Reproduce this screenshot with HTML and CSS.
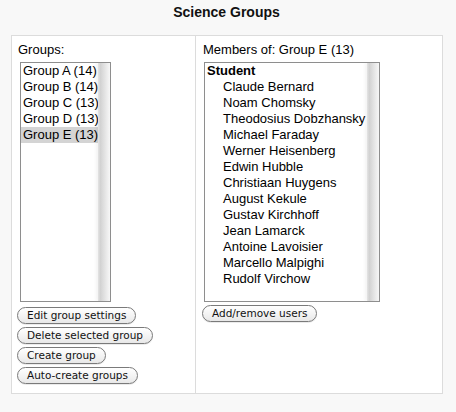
FILE: index.html
```html
<!DOCTYPE html>
<html>
<head>
<meta charset="utf-8">
<link rel="stylesheet" href="styles.css">
</head>
<body>
<h2 class="title">Science Groups</h2>
<div class="panel">
  <div class="col col-left">
    <div class="label">Groups:</div>
    <div class="listbox groups">
      <ul class="items">
        <li>Group A (14)</li>
        <li>Group B (14)</li>
        <li>Group C (13)</li>
        <li>Group D (13)</li>
        <li class="selected">Group E (13)</li>
      </ul>
      <div class="scrollbar"></div>
    </div>
    <div class="buttons">
      <button class="btn">Edit group settings</button>
      <button class="btn">Delete selected group</button>
      <button class="btn">Create group</button>
      <button class="btn">Auto-create groups</button>
    </div>
  </div>
  <div class="col col-right">
    <div class="label">Members of: Group E (13)</div>
    <div class="listbox members">
      <ul class="items">
        <li class="role">Student</li>
        <li class="member">Claude Bernard</li>
        <li class="member">Noam Chomsky</li>
        <li class="member">Theodosius Dobzhansky</li>
        <li class="member">Michael Faraday</li>
        <li class="member">Werner Heisenberg</li>
        <li class="member">Edwin Hubble</li>
        <li class="member">Christiaan Huygens</li>
        <li class="member">August Kekule</li>
        <li class="member">Gustav Kirchhoff</li>
        <li class="member">Jean Lamarck</li>
        <li class="member">Antoine Lavoisier</li>
        <li class="member">Marcello Malpighi</li>
        <li class="member">Rudolf Virchow</li>
      </ul>
      <div class="scrollbar"></div>
    </div>
    <div class="buttons buttons-right">
      <button class="btn">Add/remove users</button>
    </div>
  </div>
</div>
</body>
</html>
```
FILE: styles.css
```css
html, body {
  margin: 0;
  padding: 0;
  background: #f8f8f8;
}
body {
  font-family: "Liberation Sans", Arial, sans-serif;
  font-size: 13px;
  color: #000;
  width: 456px;
  height: 412px;
  overflow: hidden;
}
.title {
  margin: 4px 0 0 0;
  font-size: 14px;
  line-height: 16px;
  font-weight: bold;
  text-align: center;
  padding-right: 3px;
  color: #111;
}
.panel {
  margin: 15px 0 0 11px;
  width: 430px;
  height: 357px;
  border: 1px solid #dcdcdc;
  background: #fff;
  display: flex;
}
.col {
  padding-top: 6px;
}
.col-left {
  width: 178px;
  padding-left: 5px;
  border-right: 1px solid #dcdcdc;
}
.col-right {
  flex: 1;
  padding-left: 6px;
}
.label {
  line-height: 15px;
  margin-left: 1px;
  margin-bottom: 5px;
}
.listbox {
  position: relative;
  border: 1px solid #8e8e8e;
  height: 238px;
  background: #fff;
  overflow: hidden;
}
.groups {
  margin-left: 3px;
  width: 89px;
}
.members {
  margin-left: 2px;
  width: 174px;
}
.items {
  list-style: none;
  margin: 0;
  padding: 0;
  margin-right: 12px;
}
.items li {
  line-height: 16px;
  height: 16px;
  white-space: nowrap;
  padding-left: 1px;
}
.groups .items li {
  padding-left: 2px;
}
.items li.selected {
  background: #d4d4d4;
}
.members .items li.role {
  font-weight: bold;
  padding-left: 2px;
}
.members .items li.member {
  padding-left: 18px;
}
.scrollbar {
  position: absolute;
  top: 0;
  right: 0;
  bottom: 0;
  width: 12px;
  background: linear-gradient(to right, #e4e4e4 0%, #d2d2d2 20%, #dedede 45%, #ececec 75%, #f7f7f7 100%);
  box-shadow: -2px 0 3px rgba(0,0,0,0.05);
}
.buttons {
  display: flex;
  flex-direction: column;
  align-items: flex-start;
  margin-top: 5px;
}
.buttons-right {
  margin-top: 3px;
}
.btn {
  font-family: "DejaVu Sans", "Lucida Grande", sans-serif;
  font-size: 10.5px;
  height: 17px;
  line-height: 15px;
  padding: 0 9px;
  margin: 0 0 3px 0;
  border: 1px solid #7a7a7a;
  border-radius: 9px;
  background: linear-gradient(to bottom, #ffffff 0%, #f4f4f4 50%, #e8e8e8 100%);
  color: #111;
  box-shadow: 0 1px 0 rgba(0,0,0,0.08);
}
```
